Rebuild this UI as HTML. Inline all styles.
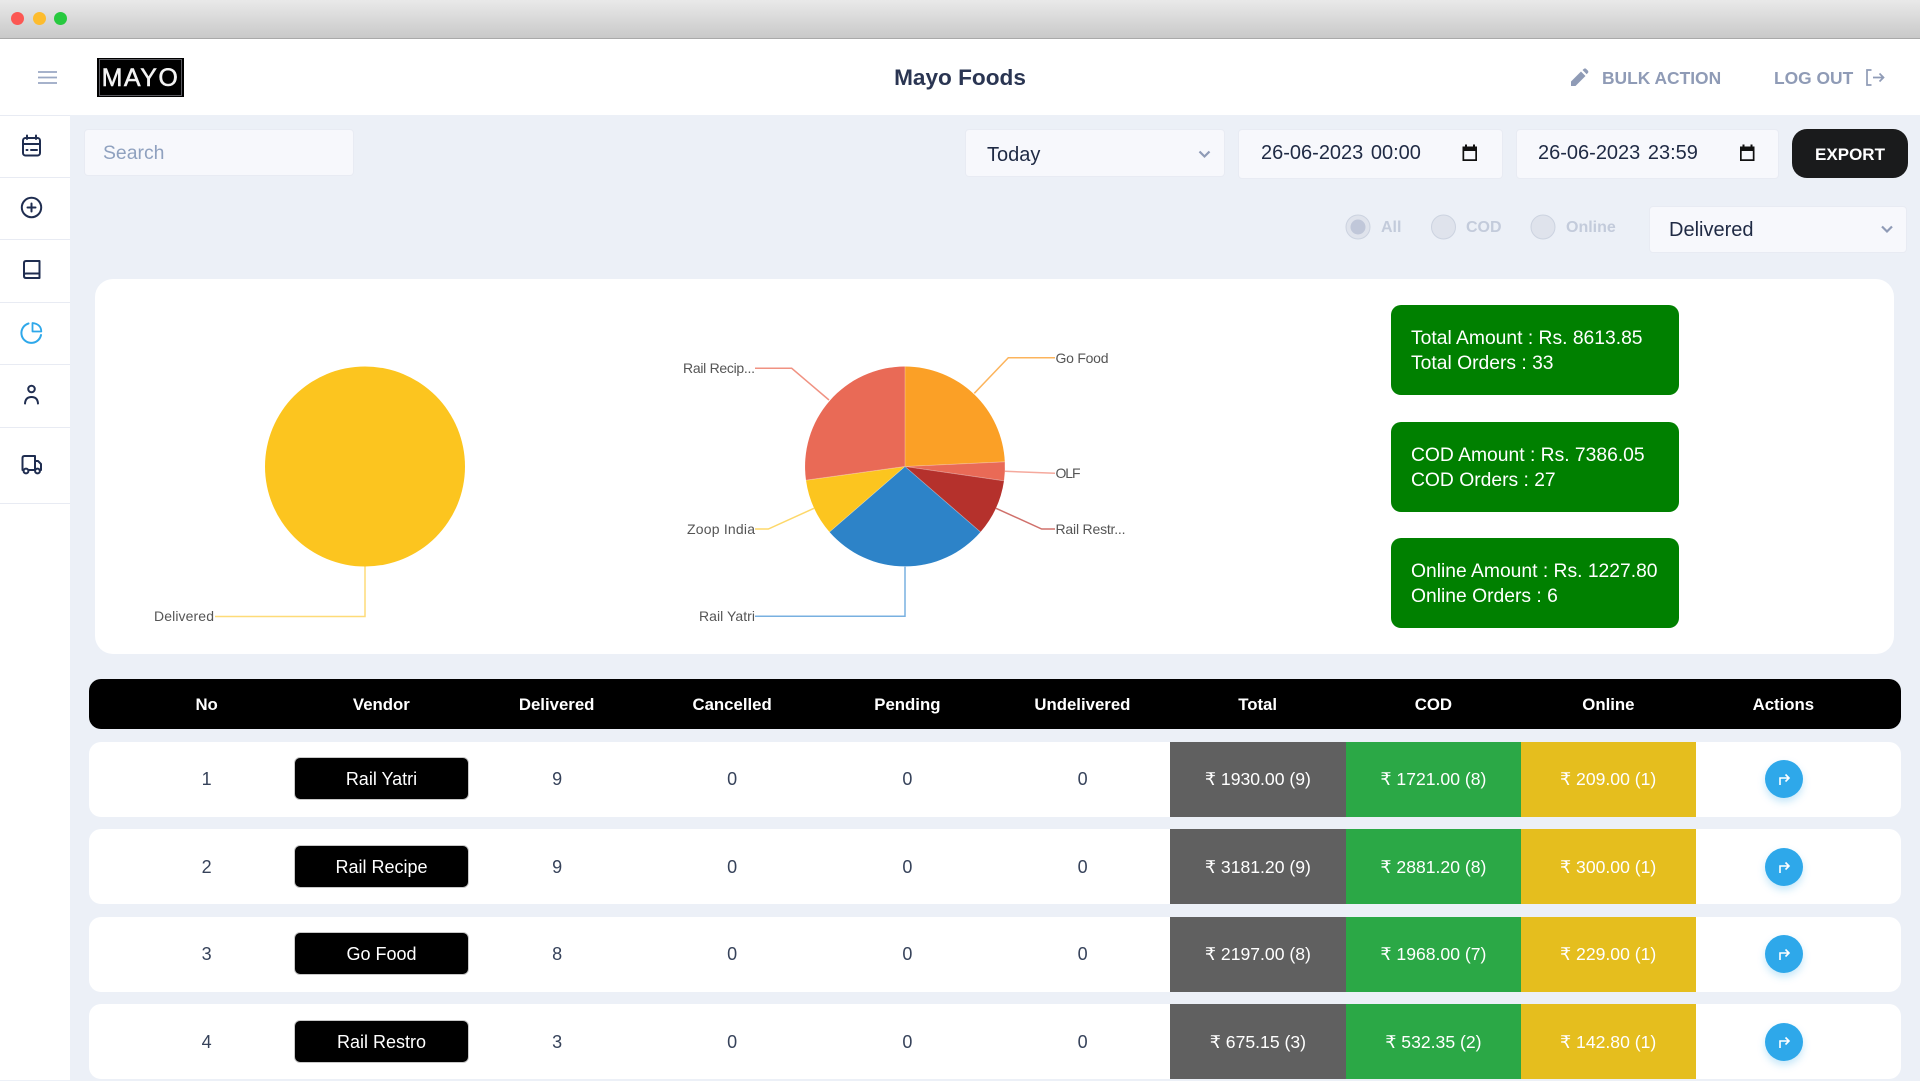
<!DOCTYPE html>
<html lang="en"><head><meta charset="utf-8"><title>Mayo Foods</title>
<style>
*{box-sizing:border-box}
html,body{margin:0;padding:0;width:1920px;height:1080px;overflow:hidden;background:#ecf0f7;font-family:"Liberation Sans",Arial,sans-serif;color:#1f2a44}
.a{position:absolute;white-space:nowrap}
.field{position:absolute;background:#f7f8fc;border:1px solid #e8ebf3;border-radius:4px;font-size:20px;color:#1f2a44;white-space:nowrap}
.lbl{position:absolute;font-size:16px;font-weight:bold;color:#c3cbdb;line-height:24px;top:216px}
.stat{position:absolute;left:1391px;width:288px;height:90px;background:#008000;border-radius:10px;color:#fff;font-size:19.3px;line-height:25px;padding:21px 0 0 20px}
.th{position:absolute;top:680px;height:50px;line-height:50px;width:175.25px;text-align:center;color:#fff;font-weight:bold;font-size:16.8px}
.row{position:absolute;left:89px;width:1812px;height:75px;background:#fff;border-radius:12px}
.c{position:absolute;top:0;height:75px;line-height:75px;width:175.25px;text-align:center;font-size:18px;color:#36425a;white-space:nowrap}
.v{position:absolute;left:205px;top:15px;width:175px;height:43px;line-height:42.5px;background:#000;border:1px solid #c8c8c8;border-radius:6px;color:#fff;text-align:center;font-size:18px}
.m{color:#fff;font-size:17.6px}
.t{left:1081px;width:175.75px;background:#606060}
.btn{position:absolute;left:1675.5px;top:18px;width:38px;height:38px;border-radius:50%;background:#2ea8ea;box-shadow:0 4px 8px rgba(46,168,234,.28)}
.o .c{line-height:77px}
.o .v,.o .btn{margin-top:1px}
.sep{position:absolute;left:0;width:70px;height:1px;background:#e8ebf3}
svg{position:absolute;overflow:visible}
</style></head><body>

<!-- title bar -->
<div class="a" style="left:0;top:0;width:1920px;height:39px;background:linear-gradient(#e9e9e9,#c9c9c9);border-bottom:1px solid #a9a9a9"></div>
<div class="a" style="left:11px;top:12px;width:13px;height:13px;border-radius:50%;background:#fc5753"></div>
<div class="a" style="left:33px;top:12px;width:13px;height:13px;border-radius:50%;background:#fdbc2e"></div>
<div class="a" style="left:54px;top:12px;width:13px;height:13px;border-radius:50%;background:#27c93f"></div>

<!-- header -->
<div class="a" style="left:0;top:39px;width:1920px;height:76px;background:#fff"></div>
<svg style="left:0;top:0" width="1920" height="120" fill="none">
<path d="M38 72H57M38 77.500H57M38 83H57" stroke="#9aa8c4" stroke-width="1.700"/>
<path d="M1571 86V81.500L1581 71.500L1585.500 76L1575.500 86ZM1582.500 70L1584 68.700Q1585 68 1586 68.700L1588 70.700Q1588.700 71.700 1588 72.700L1586.700 74.300Z" fill="#8f9bb6"/>
<path d="M1871.500 70H1867V85H1871.500M1873 77.500H1883.500M1879.500 73.500L1883.500 77.500L1879.500 81.500" stroke="#8f9bb6" stroke-width="1.700"/>
</svg>
<div class="a" style="left:97px;top:58px;width:87px;height:39px;background:#000"></div>
<div class="a" style="left:99px;top:59px;width:83px;height:37px;border:1px solid #5a5a60"></div>
<div class="a" style="left:97px;top:59px;width:87px;height:39px;line-height:39px;text-align:center;color:#f4f4f4;font-size:25px;letter-spacing:1.500px;-webkit-text-stroke:.5px #f4f4f4">MAYO</div>
<div class="a" style="left:760px;top:60px;width:400px;height:34px;line-height:35px;text-align:center;font-size:22.6px;font-weight:bold;color:#2a3552">Mayo Foods</div>
<div class="a" style="left:1602px;top:66px;height:24px;line-height:24px;font-size:17.4px;font-weight:bold;color:#8f9bb6">BULK ACTION</div>
<div class="a" style="left:1774px;top:66px;height:24px;line-height:24px;font-size:17.4px;font-weight:bold;color:#8f9bb6">LOG OUT</div>

<!-- sidebar -->
<div class="a" style="left:0;top:115px;width:70px;height:965px;background:#fff"></div>
<div class="sep" style="top:115px"></div><div class="sep" style="top:177px"></div><div class="sep" style="top:239px"></div><div class="sep" style="top:302px"></div><div class="sep" style="top:364px"></div><div class="sep" style="top:427px"></div><div class="sep" style="top:503px"></div>
<svg style="left:0;top:0" width="70" height="520" fill="none" stroke="#1f2d50" stroke-width="2" stroke-linecap="round" stroke-linejoin="round">
<rect x="23" y="138" width="17" height="17.500" rx="2.500"/><path d="M23 144H40M27 135.500V139M36 135.500V139" /><path d="M26.500 150H27.500M31 150H37"/>
<circle cx="31.500" cy="207.500" r="9.700"/><path d="M31.500 203.500V211.500M27.500 207.500H35.500"/>
<path d="M24 276V263Q24 261 26 261H39.500V278H26Q24 278 24 276ZM24 275Q24 273.500 26 273.500H39.500"/>
<path d="M41 335A9.900 9.900 0 1 1 28.500 323.500" stroke="#2ea8ea"/><path d="M32.500 323V331.500H41.300Q41 324 32.500 323Z" stroke="#2ea8ea" stroke-width="1.800"/>
<circle cx="31.500" cy="389" r="3.300"/><path d="M25 403.500Q25.500 397 31.500 397Q37.500 397 38 403.500"/>
<path d="M22.500 470V458Q22.500 456 24.500 456H35V470M35 461H38L41 464V470H39.500M35 470H29M22.500 470H23.500"/><circle cx="26" cy="471" r="2.400"/><circle cx="37.500" cy="471" r="2.400"/>
</svg>

<!-- controls -->
<div class="field" style="left:84px;top:129px;width:270px;height:47px;line-height:46px;padding-left:18px;font-size:19.4px;color:#8fa1bf">Search</div>
<div class="field" style="left:965px;top:129px;width:260px;height:48px;line-height:50px;padding-left:21px">Today</div>
<div class="field" style="left:1238px;top:129px;width:265px;height:50px;line-height:47px;padding-left:22px;font-size:20px;word-spacing:2px">26-06-2023 00:00</div>
<div class="field" style="left:1516px;top:129px;width:263px;height:50px;line-height:47px;padding-left:21px;font-size:20px;word-spacing:2px">26-06-2023 23:59</div>
<div class="a" style="left:1792px;top:129px;width:116px;height:49px;line-height:51px;background:#1a1b1c;border-radius:15px;color:#fff;font-weight:bold;font-size:17px;text-align:center">EXPORT</div>
<div class="field" style="left:1649px;top:206px;width:258px;height:47px;line-height:47px;padding-left:19px">Delivered</div>
<svg style="left:0;top:0" width="1920" height="260" fill="none">
<path d="M1199.500 151.500L1204.500 156.500L1209.500 151.500M1882 226.500L1887 231.500L1892 226.500" stroke="#8f9bb6" stroke-width="2.200"/>
<g fill="#111"><path d="M1462.500 146.500H1477V161H1462.500ZM1464.200 151V159.300H1475.300V151Z" fill-rule="evenodd"/><rect x="1465" y="144.500" width="2" height="3"/><rect x="1473" y="144.500" width="2" height="3"/>
<path d="M1740 146.500H1754.500V161H1740ZM1741.700 151V159.300H1752.800V151Z" fill-rule="evenodd"/><rect x="1742.500" y="144.500" width="2" height="3"/><rect x="1750.500" y="144.500" width="2" height="3"/></g>
<g fill="#dfe3ec" stroke="#ccd3e0" stroke-width="1"><circle cx="1358" cy="227" r="12"/><circle cx="1443.500" cy="227" r="12"/><circle cx="1543" cy="227" r="12"/></g>
<circle cx="1358" cy="227" r="7.500" fill="#c0c7d9"/>
</svg>
<div class="lbl" style="left:1381px">All</div>
<div class="lbl" style="left:1466px">COD</div>
<div class="lbl" style="left:1566px">Online</div>

<!-- chart card -->
<div class="a" style="left:95px;top:279px;width:1799px;height:375px;background:#fff;border-radius:18px"></div>
<svg style="left:0;top:0" width="1920" height="660" fill="none" font-family="'Liberation Sans',sans-serif" font-size="14">
<circle cx="365" cy="466.500" r="100" fill="#fcc51f"/>
<path d="M365 566.500V616.500H215" stroke="#fedb78" stroke-width="1.500"/>
<text x="214" y="621" text-anchor="end" fill="#555" stroke="none" textLength="60">Delivered</text>
<g transform="translate(0,-.5)">
<path d="M905 467V367A100 100 0 0 1 1004.800 462.300Z" fill="#fba026"/>
<path d="M905 467L1004.800 462.300A100 100 0 0 1 1004 481.300Z" fill="#e96a56"/>
<path d="M905 467L1004 481.300A100 100 0 0 1 980.500 532.500Z" fill="#b5312c"/>
<path d="M905 467L980.500 532.500A100 100 0 0 1 829.500 532.500Z" fill="#2d83c8"/>
<path d="M905 467L829.500 532.500A100 100 0 0 1 806 480.700Z" fill="#fcc51f"/>
<path d="M905 467L806 480.700A100 100 0 0 1 905 367Z" fill="#e96a56"/>
<path d="M905 467V367M905 467L1004.800 462.300M905 467L1004 481.300M905 467L980.500 532.500M905 467L829.500 532.500M905 467L806 480.700" stroke="#fff" stroke-opacity=".35" stroke-width=".8"/>
</g>
<path d="M974.300 393.300L1008.300 357.700H1055" stroke="#fcb45c" stroke-width="1.500"/>
<path d="M829 400L791.700 368.300H755" stroke="#f09282" stroke-width="1.500"/>
<path d="M1005 471.300L1055 473.300" stroke="#f5a99d" stroke-width="1.500"/>
<path d="M996 508.300L1041.700 529H1055" stroke="#d0706b" stroke-width="1.500"/>
<path d="M814 508.300L768.300 529H755" stroke="#fdd86a" stroke-width="1.500"/>
<path d="M905 566.700V616.300H755" stroke="#78b0e0" stroke-width="1.500"/>
<g fill="#555" stroke="none">
<text x="1055.500" y="363" textLength="53">Go Food</text>
<text x="1055.500" y="478" textLength="25">OLF</text>
<text x="1055.500" y="534" textLength="70">Rail Restr...</text>
<text x="755" y="373" text-anchor="end" textLength="72">Rail Recip...</text>
<text x="755" y="534" text-anchor="end" textLength="68">Zoop India</text>
<text x="755" y="621" text-anchor="end" textLength="56">Rail Yatri</text>
</g>
</svg>
<div class="stat" style="top:305px">Total Amount : Rs. 8613.85<br>Total Orders : 33</div>
<div class="stat" style="top:422px">COD Amount : Rs. 7386.05<br>COD Orders : 27</div>
<div class="stat" style="top:538px">Online Amount : Rs. 1227.80<br>Online Orders : 6</div>

<!-- table header -->
<div class="a" style="left:89px;top:679px;width:1812px;height:50px;background:#000;border-radius:12px"></div>
<div class="th" style="left:119px">No</div><div class="th" style="left:293.750px">Vendor</div><div class="th" style="left:469px">Delivered</div><div class="th" style="left:644.500px">Cancelled</div><div class="th" style="left:819.750px">Pending</div><div class="th" style="left:994.750px">Undelivered</div><div class="th" style="left:1170px">Total</div><div class="th" style="left:1345.750px">COD</div><div class="th" style="left:1520.750px">Online</div><div class="th" style="left:1695.750px">Actions</div>

<!-- rows -->
<div class="row" style="top:742px">
<div class="c" style="left:30px">1</div><div class="v">Rail Yatri</div><div class="c" style="left:380.500px">9</div><div class="c" style="left:555.500px">0</div><div class="c" style="left:730.750px">0</div><div class="c" style="left:906px">0</div>
<div class="c m t">₹ 1930.00 (9)</div><div class="c m" style="left:1256.750px;background:#2ba846">₹ 1721.00 (8)</div><div class="c m" style="left:1431.500px;background:#e5be1e">₹ 209.00 (1)</div>
<div class="btn"><svg width="38" height="38" fill="none" stroke="#fff" stroke-width="1.600"><path d="M15 25V18H24M20.500 14.500L24 18L20.500 21.500"/></svg></div>
</div>
<div class="row o" style="top:829px">
<div class="c" style="left:30px">2</div><div class="v">Rail Recipe</div><div class="c" style="left:380.500px">9</div><div class="c" style="left:555.500px">0</div><div class="c" style="left:730.750px">0</div><div class="c" style="left:906px">0</div>
<div class="c m t">₹ 3181.20 (9)</div><div class="c m" style="left:1256.750px;background:#2ba846">₹ 2881.20 (8)</div><div class="c m" style="left:1431.500px;background:#e5be1e">₹ 300.00 (1)</div>
<div class="btn"><svg width="38" height="38" fill="none" stroke="#fff" stroke-width="1.600"><path d="M15 25V18H24M20.500 14.500L24 18L20.500 21.500"/></svg></div>
</div>
<div class="row" style="top:917px">
<div class="c" style="left:30px">3</div><div class="v">Go Food</div><div class="c" style="left:380.500px">8</div><div class="c" style="left:555.500px">0</div><div class="c" style="left:730.750px">0</div><div class="c" style="left:906px">0</div>
<div class="c m t">₹ 2197.00 (8)</div><div class="c m" style="left:1256.750px;background:#2ba846">₹ 1968.00 (7)</div><div class="c m" style="left:1431.500px;background:#e5be1e">₹ 229.00 (1)</div>
<div class="btn"><svg width="38" height="38" fill="none" stroke="#fff" stroke-width="1.600"><path d="M15 25V18H24M20.500 14.500L24 18L20.500 21.500"/></svg></div>
</div>
<div class="row o" style="top:1004px">
<div class="c" style="left:30px">4</div><div class="v">Rail Restro</div><div class="c" style="left:380.500px">3</div><div class="c" style="left:555.500px">0</div><div class="c" style="left:730.750px">0</div><div class="c" style="left:906px">0</div>
<div class="c m t">₹ 675.15 (3)</div><div class="c m" style="left:1256.750px;background:#2ba846">₹ 532.35 (2)</div><div class="c m" style="left:1431.500px;background:#e5be1e">₹ 142.80 (1)</div>
<div class="btn"><svg width="38" height="38" fill="none" stroke="#fff" stroke-width="1.600"><path d="M15 25V18H24M20.500 14.500L24 18L20.500 21.500"/></svg></div>
</div>
</body></html>
